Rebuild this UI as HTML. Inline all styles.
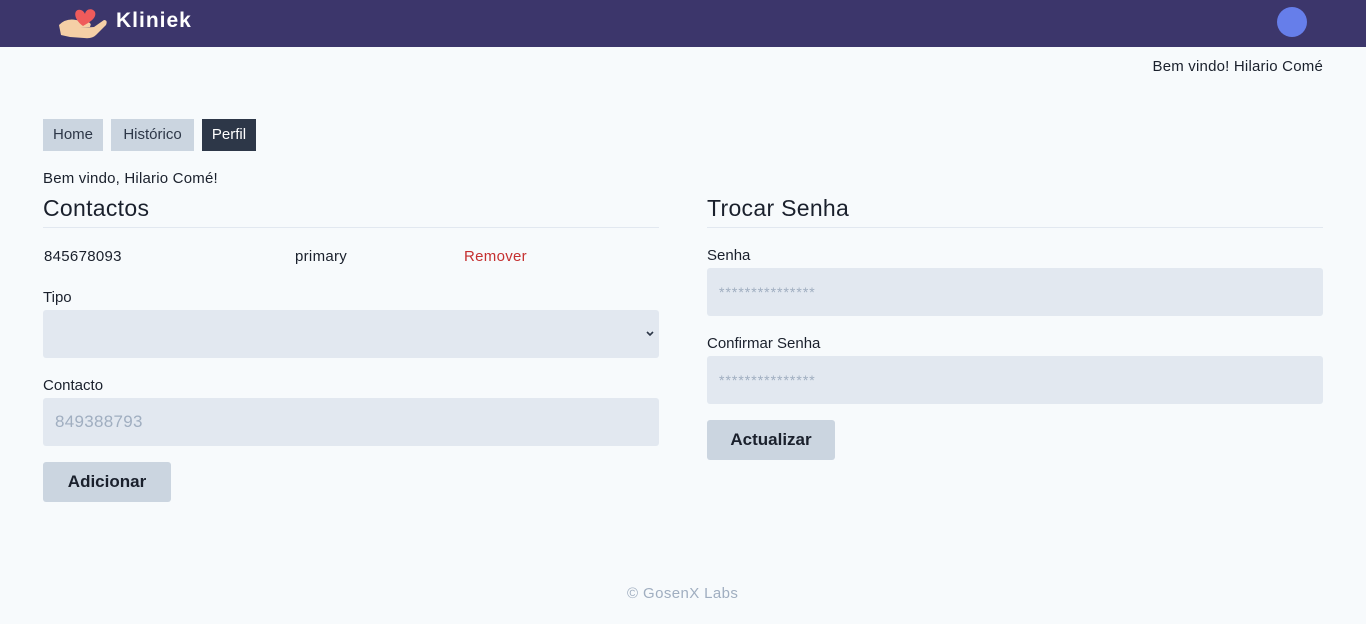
<!DOCTYPE html>
<html><head><meta charset="utf-8"><style>
*{box-sizing:border-box;margin:0;padding:0}
body{width:1366px;height:624px;background:#f7fafc;font-family:"Liberation Sans",sans-serif;color:#1a202c;position:relative;overflow:hidden}
.nav{position:absolute;left:0;top:0;width:1366px;height:47px;background:#3c366b}
.brand{position:absolute;left:116px;top:9px;color:#fff;font-weight:bold;font-size:21px;letter-spacing:1px}
.av{position:absolute;left:1277px;top:7px;width:30px;height:30px;border-radius:50%;background:#667eea}
.abs{position:absolute}
.tab{position:absolute;top:119px;height:32px;line-height:32px;font-size:15px;text-align:center;background:#cbd5e0;color:#2d3748}
.in{position:absolute;height:48px;background:#e2e8f0;border-radius:3px}
.lbl{position:absolute;font-size:15px;color:#1a202c;top:0}
.btn{position:absolute;height:40px;line-height:40px;background:#cbd5e0;border-radius:3px;font-weight:bold;font-size:17px;text-align:center;color:#1a202c}
.h{position:absolute;font-size:23px;color:#1a202c;letter-spacing:0.3px}
.hr{position:absolute;height:1px;background:#e2e8f0}
.ph{position:absolute;color:#a0aec0}
</style></head><body>
<div class="nav">
<svg class="abs" style="left:58px;top:5px" width="50" height="36" viewBox="0 0 50 36">
<path d="M1 20 Q8 13 18 15 L30 17 Q34 18 32 22 L22 23 L36 22 L46 15 Q50 15 48 20 L38 30 Q34 34 26 33 L12 32 L3 30 Z" fill="#f5cfa6"/>
<path d="M25 21 C14 13 16 3 23 5 C26 6 27 9 27 9 C28 3 35 3 37 7 C39 13 32 17 25 21 Z" fill="#ef5b5b"/>
</svg>
<div class="brand">Kliniek</div>
<div class="av"></div>
</div>
<div class="abs" style="right:43px;top:58px;font-size:15px;letter-spacing:0.2px">Bem vindo! Hilario Comé</div>
<div class="tab" style="left:43px;width:60px">Home</div>
<div class="tab" style="left:111px;width:83px">Histórico</div>
<div class="tab" style="left:202px;width:54px;background:#2d3748;color:#fff">Perfil</div>
<div class="abs" style="left:43px;top:170px;font-size:15px;letter-spacing:0.2px">Bem vindo, Hilario Comé!</div>
<div class="h" style="left:43px;top:195px">Contactos</div>
<div class="hr" style="left:43px;top:227px;width:616px"></div>
<div class="lbl" style="left:44px;top:248px;letter-spacing:0.3px">845678093</div>
<div class="lbl" style="left:295px;top:248px;letter-spacing:0.3px">primary</div>
<div class="lbl" style="left:464px;top:248px;color:#c53030;letter-spacing:0.3px">Remover</div>
<div class="lbl" style="left:43px;top:289px">Tipo</div>
<div class="in" style="left:43px;top:310px;width:616px"><svg class="abs" style="right:4px;top:20px" width="10" height="8" viewBox="0 0 10 8"><path d="M2 2 L5 5 L8 2" stroke="#2d3748" stroke-width="1.6" fill="none"/></svg></div>
<div class="lbl" style="left:43px;top:377px">Contacto</div>
<div class="in" style="left:43px;top:398px;width:616px"><span class="ph" style="left:12px;top:14px;font-size:17px;letter-spacing:0.3px">849388793</span></div>
<div class="btn" style="left:43px;top:462px;width:128px">Adicionar</div>
<div class="h" style="left:707px;top:195px">Trocar Senha</div>
<div class="hr" style="left:707px;top:227px;width:616px"></div>
<div class="lbl" style="left:707px;top:247px">Senha</div>
<div class="in" style="left:707px;top:268px;width:616px"><span class="ph" style="left:12px;top:16px;font-size:14px;letter-spacing:1px">***************</span></div>
<div class="lbl" style="left:707px;top:335px">Confirmar Senha</div>
<div class="in" style="left:707px;top:356px;width:616px"><span class="ph" style="left:12px;top:16px;font-size:14px;letter-spacing:1px">***************</span></div>
<div class="btn" style="left:707px;top:420px;width:128px">Actualizar</div>
<div class="abs" style="left:627px;top:585px;font-size:15px;color:#a0aec0;letter-spacing:0.4px">© GosenX Labs</div>
</body></html>
